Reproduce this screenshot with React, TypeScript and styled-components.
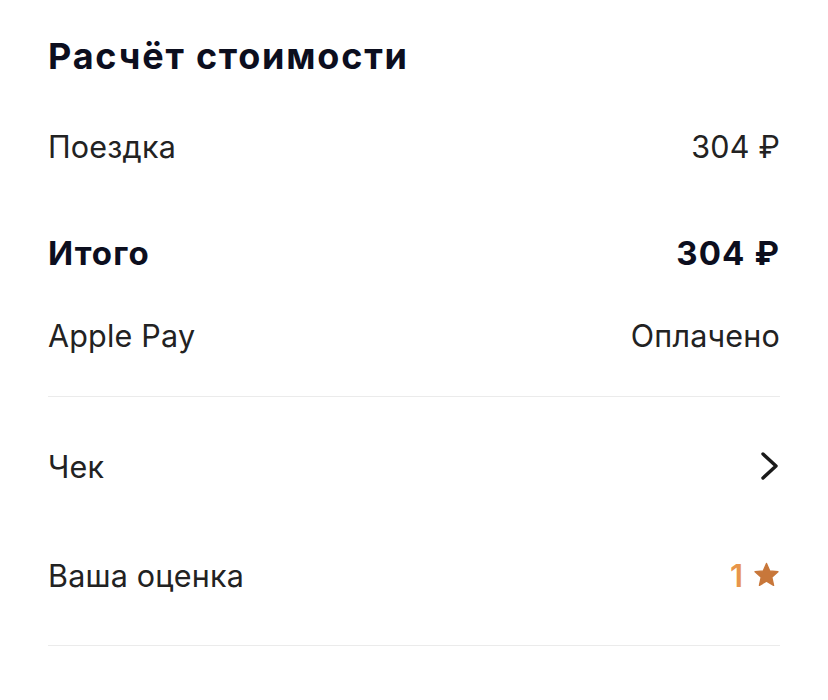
import styled, { createGlobalStyle } from 'styled-components';

const GlobalStyle = createGlobalStyle`
  body {
    margin: 0;
    background: #ffffff;
    font-family: Inter, "Noto Sans", "Liberation Sans", sans-serif;
    -webkit-font-smoothing: antialiased;
  }
`;

const Card = styled.div`
  width: 732px;
  padding: 28px 48px 0 48px;
  display: flex;
  flex-direction: column;
`;

const Title = styled.h1`
  margin: 0 0 26px 0;
  font-size: 36px;
  line-height: 56px;
  font-weight: 700;
  color: #0c0e1e;
  letter-spacing: 1.8px;
`;

const Row = styled.div<{ $height: number }>`
  display: flex;
  align-items: center;
  justify-content: space-between;
  height: ${(p) => p.$height}px;
  color: #222222;
`;

const Label = styled.span<{ $bold?: boolean }>`
  font-size: ${(p) => (p.$bold ? 33 : 30.5)}px;
  font-weight: ${(p) => (p.$bold ? 700 : 400)};
  letter-spacing: ${(p) => (p.$bold ? 1.1 : 0.2)}px;
  color: ${(p) => (p.$bold ? '#0c0e1e' : '#222222')};
`;

const Spacer = styled.div<{ $h: number }>`
  height: ${(p) => p.$h}px;
`;

const Divider = styled.div`
  height: 1px;
  background: #ebebeb;
`;

const Rating = styled.span`
  display: flex;
  align-items: center;
  gap: 10px;
  font-size: 31px;
  font-weight: 600;
  color: #e8954a;
`;

const Chevron = () => (
  <svg width="20" height="30" viewBox="0 0 20 30" fill="none">
    <path d="M3 3 L16 15 L3 27" stroke="#1a1a1a" strokeWidth="3.4" strokeLinecap="round" strokeLinejoin="round" />
  </svg>
);

const Star = () => (
  <svg width="27" height="26" viewBox="0 0 24 23">
    <path
      d="M12 1.2 L14.9 7.9 L22.2 8.6 L16.7 13.5 L18.3 20.7 L12 17 L5.7 20.7 L7.3 13.5 L1.8 8.6 L9.1 7.9 Z"
      fill="#c8773a"
      stroke="#c8773a"
      strokeWidth="1.2"
      strokeLinejoin="round"
    />
  </svg>
);

export default function App() {
  return (
    <>
      <GlobalStyle />
      <Card>
        <Title>Расчёт стоимости</Title>
        <Row $height={72}>
          <Label>Поездка</Label>
          <Label>304 ₽</Label>
        </Row>
        <Row $height={142}>
          <Label $bold>Итого</Label>
          <Label $bold>304 ₽</Label>
        </Row>
        <Row $height={22}>
          <Label>Apple Pay</Label>
          <Label>Оплачено</Label>
        </Row>
        <Spacer $h={50} />
        <Divider />
        <Row $height={138}>
          <Label>Чек</Label>
          <Chevron />
        </Row>
        <Row $height={80}>
          <Label>Ваша оценка</Label>
          <Rating>
            1
            <Star />
          </Rating>
        </Row>
        <Spacer $h={30} />
        <Divider />
      </Card>
    </>
  );
}
